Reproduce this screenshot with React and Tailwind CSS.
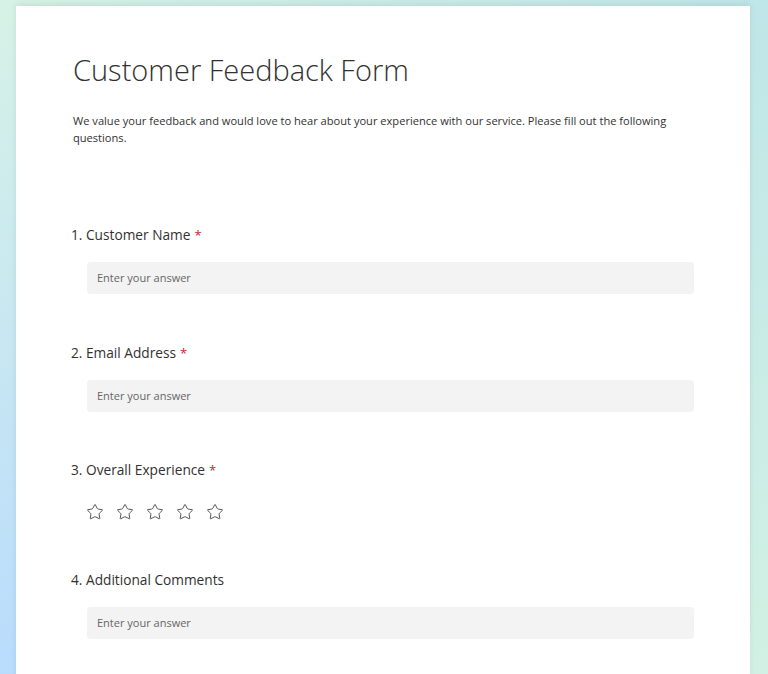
import React from 'react';
import { Star } from 'lucide-react';

const font = { fontFamily: '"Segoe UI", "Open Sans", sans-serif' };

const Question = ({ number, label, required, children, className = '' }) => (
  <div className={className}>
    <div className="text-[13.7px] leading-[20px] text-[#323130]">
      {number}. {label}
      {required && <span className="ml-[4px] text-[13px] text-[#c4262e]">*</span>}
    </div>
    {children}
  </div>
);

const AnswerInput = () => (
  <div className="ml-[16px] mt-[17px] flex h-[32px] items-center rounded-[4px] bg-[#f3f3f3] px-[10px] text-[11px] text-[#666666]">
    Enter your answer
  </div>
);

export default function App() {
  return (
    <div
      className="h-[674px] overflow-hidden pt-[6px] [background:linear-gradient(to_right,#d6f2e6,#bfe6e8)_top/100%_8px_no-repeat,linear-gradient(to_bottom,#d6f2e6,#b9dcfd)_left/50%_100%_no-repeat,linear-gradient(to_bottom,#bfe6e8,#d2f1e4)_right/50%_100%_no-repeat]"
      style={font}
    >
      <div className="ml-[16px] min-h-[700px] w-[734px] bg-white pl-[55px] pr-[56px] pt-[46px] shadow-[0_-2px_6px_rgba(0,0,0,0.08)]">
        <h1 className="ml-[2px] text-[29px] font-light leading-[36px] text-[#323130]">Customer Feedback Form</h1>
        <p className="ml-[2px] mt-[24px] text-[11.1px] leading-[17px] text-[#323130]">
          We value your feedback and would love to hear about your experience with our service. Please fill out the following questions.
        </p>

        <Question number={1} label="Customer Name" required className="mt-[79px]">
          <AnswerInput />
        </Question>

        <Question number={2} label="Email Address" required className="mt-[49px]">
          <AnswerInput />
        </Question>

        <Question number={3} label="Overall Experience" required className="mt-[48px]">
          <div className="ml-[15px] mt-[23px] flex gap-[12px]">
            {[1, 2, 3, 4, 5].map((n) => (
              <Star key={n} size={18} strokeWidth={1.3} className="text-[#505050]" />
            ))}
          </div>
        </Question>

        <Question number={4} label="Additional Comments" className="mt-[49px]">
          <AnswerInput />
        </Question>
      </div>
    </div>
  );
}
